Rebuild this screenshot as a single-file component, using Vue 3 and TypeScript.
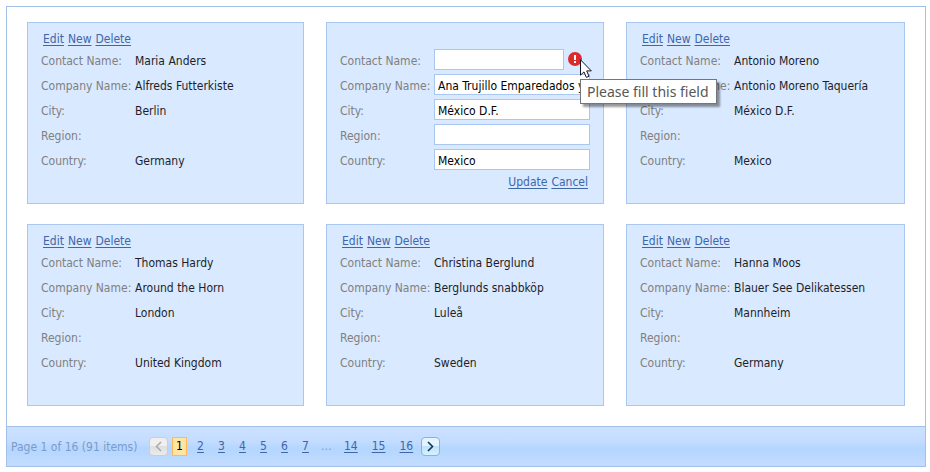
<script setup lang="ts">
import { reactive } from 'vue'

interface Field {
  key: string
  label: string
  value: string
  invalid?: boolean
}

interface Card {
  id: number
  editing: boolean
  fields: Field[]
}

const makeCard = (
  id: number,
  contact: string,
  company: string,
  city: string,
  country: string,
  editing = false,
): Card => ({
  id,
  editing,
  fields: [
    { key: 'contact', label: 'Contact Name:', value: contact, invalid: editing && !contact },
    { key: 'company', label: 'Company Name:', value: company },
    { key: 'city', label: 'City:', value: city },
    { key: 'region', label: 'Region:', value: '' },
    { key: 'country', label: 'Country:', value: country },
  ],
})

const cards = reactive<Card[]>([
  makeCard(1, 'Maria Anders', 'Alfreds Futterkiste', 'Berlin', 'Germany'),
  makeCard(2, '', 'Ana Trujillo Emparedados y helados', 'México D.F.', 'Mexico', true),
  makeCard(3, 'Antonio Moreno', 'Antonio Moreno Taquería', 'México D.F.', 'Mexico'),
  makeCard(4, 'Thomas Hardy', 'Around the Horn', 'London', 'United Kingdom'),
  makeCard(5, 'Christina Berglund', 'Berglunds snabbköp', 'Luleå', 'Sweden'),
  makeCard(6, 'Hanna Moos', 'Blauer See Delikatessen', 'Mannheim', 'Germany'),
])

const pages: (number | string)[] = [2, 3, 4, 5, 6, 7, '…', 14, 15, 16]
</script>

<template>
  <main class="card-view">
    <section class="cards">
      <article v-for="card in cards" :key="card.id" class="card">
        <form v-if="card.editing" class="edit-form" novalidate @submit.prevent>
          <div v-for="field in card.fields" :key="field.key" class="row">
            <label class="label" :for="`${field.key}-${card.id}`">{{ field.label }}</label>
            <div class="editor">
              <input
                :id="`${field.key}-${card.id}`"
                v-model="field.value"
                class="text-box"
                type="text"
                :aria-invalid="field.invalid"
                :aria-describedby="field.invalid ? 'field-error' : undefined"
              />
              <span v-if="field.invalid" class="error">
                <svg class="error-icon" width="14" height="14" viewBox="0 0 14 14" aria-hidden="true">
                  <circle cx="7" cy="7" r="7" fill="#dd2a2c" />
                  <path d="M6 3h2v5H6zM6 9h2v2H6z" fill="#fff" />
                </svg>
                <svg class="pointer" width="12" height="20" viewBox="0 0 12 20" aria-hidden="true">
                  <path
                    d="M.5 .8V16.2L4 12.9L6.3 18.4L9 17.3L6.7 11.9H11.3Z"
                    fill="#fff"
                    stroke="#15152a"
                    stroke-width="1"
                  />
                </svg>
                <span id="field-error" class="tooltip" role="tooltip">Please fill this field</span>
              </span>
            </div>
          </div>
          <div class="commands commands-end">
            <a href="#update">Update</a>
            <a href="#cancel">Cancel</a>
          </div>
        </form>
        <template v-else>
          <div class="commands">
            <a href="#edit">Edit</a>
            <a href="#new">New</a>
            <a href="#delete">Delete</a>
          </div>
          <dl class="fields">
            <div v-for="field in card.fields" :key="field.key" class="row">
              <dt class="label">{{ field.label }}</dt>
              <dd class="value">{{ field.value }}</dd>
            </div>
          </dl>
        </template>
      </article>
    </section>

    <nav class="pager" aria-label="Pages">
      <span class="summary">Page 1 of 16 (91 items)</span>
      <button class="arrow" type="button" disabled aria-label="Previous page">
        <svg width="9" height="11" viewBox="0 0 9 11" aria-hidden="true">
          <path d="M7 1L2.5 5.5L7 10" fill="none" stroke="#a9a9ab" stroke-width="1.5" />
        </svg>
      </button>
      <ul class="pages">
        <li class="page current" aria-current="page">1</li>
        <li v-for="page in pages" :key="page" class="page" :class="{ ellipsis: page === '…' }">
          <a v-if="typeof page === 'number'" :href="`#page-${page}`">{{ page }}</a>
          <template v-else>{{ page }}</template>
        </li>
      </ul>
      <button class="arrow" type="button" aria-label="Next page">
        <svg width="9" height="11" viewBox="0 0 9 11" aria-hidden="true">
          <path d="M2 1L6.5 5.5L2 10" fill="none" stroke="#123f5e" stroke-width="1.7" />
        </svg>
      </button>
    </nav>
  </main>
</template>

<style>
body {
  margin: 0;
  background: #fff;
}
</style>

<style scoped>
.card-view {
  margin: 6px 4px 5px 6px;
  border: 1px solid #a3c0e8;
  color: #1e1e28;
  font: 12px/18px "DejaVu Sans Condensed", "Noto Sans", sans-serif;
}

.cards {
  display: grid;
  grid-template-columns: 277fr 278fr 279fr;
  gap: 20px 22px;
  padding: 15px 20px 20px;
}

.card {
  min-width: 0;
  min-height: 165px;
  padding: 7px 13px 8px;
  border: 1px solid #a9c7f0;
  background: #d9e9ff;
}

.commands {
  display: flex;
  gap: 4px;
  padding: 0 2px;
}

.commands-end {
  justify-content: flex-end;
}

a {
  color: #3f66a8;
  text-decoration: underline;
  text-underline-offset: 2px;
}

.fields {
  margin: 0;
}

.edit-form {
  padding-top: 18px;
}

.row {
  display: grid;
  grid-template-columns: 94px minmax(0, 1fr);
  align-items: center;
  height: 25px;
}

.label {
  color: #808080;
  white-space: nowrap;
}

.value {
  margin: 0;
}

.editor {
  display: flex;
  gap: 4px;
  padding-bottom: 2px;
}

.text-box {
  box-sizing: border-box;
  flex: 1;
  min-width: 0;
  height: 21px;
  padding: 2px 3px 0;
  border: 1px solid #a9c7f0;
  border-radius: 0;
  outline: none;
  background: #fff;
  color: #000;
  font: inherit;
}

.error {
  position: relative;
  width: 22px;
}

.error-icon {
  display: block;
  margin-top: 3px;
}

.pointer {
  position: absolute;
  z-index: 3;
  top: 10px;
  left: 12px;
}

.tooltip {
  position: absolute;
  z-index: 2;
  top: 30px;
  left: 12px;
  padding: 0 7px 0 6px;
  border: 1px solid #767676;
  background: #fff;
  box-shadow: 3px 3px 2px rgba(0, 0, 0, 0.4);
  color: #575757;
  font: 14px/23px "Noto Sans", "Open Sans", sans-serif;
  white-space: nowrap;
}

.pager {
  display: flex;
  align-items: center;
  gap: 4px;
  height: 39px;
  padding: 0 4px;
  border-top: 1px solid #a3c0e8;
  background: linear-gradient(#cbe1ff, #c4ddff 35%, #b4d6ff 55%, #b7d7ff 65%, #c4ddff);
}

.summary {
  min-width: 130px;
  margin-right: 4px;
  color: #7b9bc9;
}

.arrow {
  display: grid;
  place-items: center;
  width: 19px;
  height: 19px;
  padding: 0;
  border: 1px solid #83b5d6;
  border-radius: 4px;
  background: linear-gradient(#e3f3ff 50%, #bfe2fa 50%, #d8f0ff);
}

.arrow:disabled {
  border-color: #cdcdcf;
  background: linear-gradient(#efeff0 50%, #e0e0e1 50%, #ebebec);
}

.pages {
  display: flex;
  gap: 6px;
  margin: 0;
  padding: 0;
  list-style: none;
}

.page {
  box-sizing: border-box;
  min-width: 15px;
  padding: 0 3px;
  border: 1px solid transparent;
  line-height: 17px;
  text-align: center;
}

.current {
  border-color: #ffb759;
  background: #ffe5a3;
  color: #000;
}

.ellipsis {
  padding: 0;
  color: #7b9bc9;
}
</style>
